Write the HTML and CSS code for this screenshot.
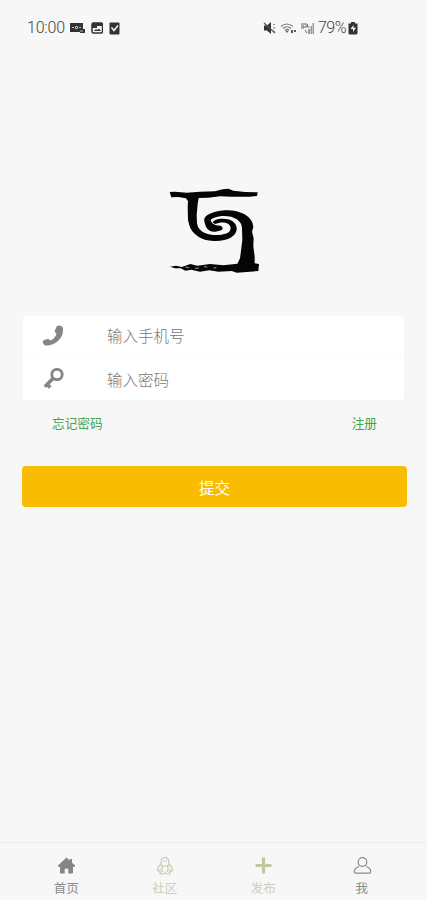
FILE: index.html
```html
<!DOCTYPE html>
<html lang="zh-CN">
<head>
<meta charset="utf-8">
<meta name="viewport" content="width=device-width, initial-scale=1">
<title>登录</title>
<link rel="stylesheet" href="styles.css">
</head>
<body>
<div class="screen">
  <header class="status">
    <div class="status-left">
      <span class="clock">10:00</span>
      <svg width="15" height="12" viewBox="0 0 15 12"><path fill="#333" d="M0 1h13v6h2v4H10v-1H0z"/><path fill="none" stroke="#bbb" d="M2 5.500h2M5.500 4.500h2v2h-2zM9 5.500h2M10 9h3"/></svg>
      <svg width="12" height="12" viewBox="0 0 12 12"><rect x="1" y="1" width="10.500" height="10" rx="1.500" fill="none" stroke="#333" stroke-width="1.500"/><path fill="#333" d="M1 1h10v3H6v2H1zM3 9l2-2 1.500 1L8 6.500l2 2.500z"/></svg>
      <svg width="11" height="13" viewBox="0 0 11 13"><rect x=".5" y=".5" width="10" height="12" rx="1" fill="#333"/><path d="M2.500 5.500l2.500 3 4-5" fill="none" stroke="#f5f5f5" stroke-width="1.500"/></svg>
    </div>
    <div class="status-right">
      <svg width="14" height="12" viewBox="0 0 14 12"><path fill="#333" d="M1 3.500h3L8 0v12L4 8.500H1z"/><path d="M1 1l11 10" stroke="#555" stroke-width="1.300"/><path d="M10 3l2-1M10 6h2.500M10.500 9l1.500 1" stroke="#777"/></svg>
      <svg width="17" height="13" viewBox="0 0 17 13"><path fill="none" stroke="#777" stroke-width="1.200" d="M1 4.500q6-5 12 0M3 6.500q4-3.500 8 0M5 8.500q2-2 4 0"/><path fill="#555" d="M5.500 9h3L7 11zM11 8h2v3h-2zM14 8h2v2h-2z"/></svg>
      <svg width="15" height="13" viewBox="0 0 15 13"><path fill="none" stroke="#666" d="M1 2h4M1 4h3v2H1M6 1v5M7.500 2v3h2M5 8l2 3"/><path fill="#999" d="M8 7h2v5H8zM10.500 4h1.500v8h-1.500zM12.500 1H14v11h-1.500z"/></svg>
      <span class="battery">79%</span>
      <svg width="10" height="13" viewBox="0 0 10 13"><path fill="#333" d="M3 0h4v1.500h2.500v10L8.500 12.500h-7L.5 11.500v-10H3z"/><path fill="#f5f5f5" d="M5.500 3L2.500 7H5v3l3-4.200H5.500z"/></svg>
    </div>
  </header>

  <main class="login">
    <svg class="logo" width="110" height="100" viewBox="0 0 330 300">
      <g fill="#050505">
        <path d="M29 36L45 35 80 38 120 35 165 34 188 28 205 26 220 32 255 36 293 37 291 48 270 50 215 50 180 49 145 53 116 54 113 72 110 105 111 130C114 151 132 163 160 165 191 166 212 160 212 144 210 124 180 125 166 132L158 128Q160 120 177 117C202 113 229 122 230 144 232 166 205 185 160 183 125 183 94 161 88 136L84 120 83 80 84 64 78 55 55 51 34 52Z"/>
        <path d="M280 142C279 108 240 90 194 91 155 94 129 108 133 123 136 143 146 157 166 155L184 151Q193 144 182 137L168 136Q154 131 152 120 157 112 185 108C222 106 248 122 246 148L247 180 243 212 240 235 232 251 190 256 150 252 112 257 91 252 65 261 48 257 30 260 45 265 62 265 76 272 94 269 120 275 148 271 175 275 215 273 230 278 270 275 295 273 297 252 284 250 284 230 280 198 281 175 276 155Z"/>
      </g>
      <path d="M76 261l12 2M105 265l12-1M132 259l10 3M160 264l9-1" stroke="#ddd" stroke-width="2"/>
    </svg>

    <form class="form">
      <div class="card">
        <label class="row">
          <svg class="row-icon" width="22" height="22" viewBox="0 0 22 22"><path fill="#858585" d="M14.700 1.200Q17 -.2 19 .8L20.800 2.500Q21.900 10 16.500 15.500 10.500 21 3 20.500L1 18.300Q.2 16.500 1.700 15.200L6.200 13.800 8.300 15.500Q12.800 13.800 14.500 9L12.800 6.800Q12.500 5.500 13.500 4.300Z"/></svg>
          <input class="field" type="tel" placeholder="输入手机号">
        </label>
        <label class="row">
          <svg class="row-icon" width="22" height="22" viewBox="0 0 22 22"><g fill="none" stroke="#858585"><circle cx="15" cy="6.500" r="5.200" stroke-width="2.800"/><path d="M11.200 10.300L2.800 18.700M4.300 15.500l4 4" stroke-width="3.600"/></g></svg>
          <input class="field" type="password" placeholder="输入密码">
        </label>
      </div>
      <div class="links"><a>忘记密码</a><a>注册</a></div>
      <button class="submit" type="button">提交</button>
    </form>
  </main>

  <nav class="tabs">
    <a class="tab">
      <svg width="20" height="20" viewBox="0 0 20 20"><path fill="#858585" d="M10.500 1.500L13.700 4.500V3h2.300V6.700L19 9.600v1.200h-2V16.500q0 1-1 1h-3.700v-4.700H8.700v4.700H5q-1 0-1-1V10.800H2V9.600z"/></svg>
      <span>首页</span>
    </a>
    <a class="tab muted">
      <svg width="20" height="20" viewBox="0 0 20 20"><g fill="none" stroke="#c8cbb0" stroke-width="1.200"><path d="M6 8V6Q6.500 1.500 10 1.500T14 6V8q3.800 3.500 3.500 6.500-.6 1.300-2.200-.3Q15.500 15 14.200 16q1.500.8.6 1.800-3 .7-4.800-.8Q8.200 18.500 5.200 17.800q-.9-1 .6-1.800Q4.500 15 4.700 14.200q-1.600 1.600-2.200.3Q2.200 11.500 6 8z"/><path d="M6 9q4 2.500 8 0M7.300 10q-1.300 3 .7 6M12.700 10q1.300 3-.7 6M8.700 4.500V6M11.300 4.500V6"/></g></svg>
      <span>社区</span>
    </a>
    <a class="tab muted">
      <svg width="20" height="20" viewBox="0 0 20 20"><path d="M10.500 1.500v16M2.500 9.500h16" stroke="#c3c79d" stroke-width="3.200"/></svg>
      <span>发布</span>
    </a>
    <a class="tab">
      <svg width="20" height="20" viewBox="0 0 20 20"><g fill="none" stroke="#8a8a8a" stroke-width="1.200" stroke-linejoin="round"><circle cx="10.500" cy="6" r="4.300"/><path d="M7 10.500Q2.200 12 2.200 16q0 1.200 1.200 1.200h14.200q1.200 0 1.200-1.200Q18.800 12 14 10.500"/></g></svg>
      <span>我</span>
    </a>
  </nav>
</div>
</body>
</html>
```
FILE: styles.css
```css
* { box-sizing: border-box; }

body {
  margin: 0;
  background: #f7f7f7;
  font-family: "Noto Sans CJK SC", sans-serif;
  font-weight: 300;
}

svg { display: block; flex: none; }

.screen {
  display: flex;
  flex-direction: column;
  height: 900px;
}

.status {
  display: flex;
  justify-content: space-between;
  height: 56px;
  padding: 0 69px 0 27px;
  color: #444;
  font: 16px/20px Roboto, sans-serif;
  font-weight: 300;
}

.status-left,
.status-right { display: flex; align-items: center; }

.status-left { gap: 6px; }
.status-right { gap: 3px; }
.clock { width: 37px; white-space: nowrap; letter-spacing: -0.2px; }
.battery { margin-right: -1px; letter-spacing: -0.5px; }

.login {
  flex: 1;
  padding: 124px 20px 0 22px;
}

.logo { margin-left: 138px; }

.form { margin-top: 36px; }

.card {
  width: 381px;
  margin-left: 1px;
  border-radius: 3px;
  background: #fff;
}

.row {
  display: flex;
  align-items: center;
  height: 42px;
  padding-left: 19px;
}

.row-icon { margin-top: -3px; }

.row + .row { border-top: 1px solid #fafafa; }

.row + .row .row-icon { margin-top: -1px; }

.field {
  flex: 1;
  height: 40px;
  margin-left: 43px;
  padding: 0 0 4px;
  border: 0;
  outline: 0;
  background: transparent;
  font: inherit;
  font-size: 15.5px;
}

.row + .row .field { padding-bottom: 2px; }

.field::placeholder { color: #777; opacity: 1; }

.links {
  display: flex;
  justify-content: space-between;
  height: 66px;
  padding: 13px 30px 0;
  color: #45a34d;
  font-size: 12.7px;
  font-weight: 400;
  line-height: 20px;
}

.submit {
  display: block;
  width: 385px;
  height: 41px;
  padding: 0;
  border: 0;
  border-radius: 4px;
  background: #f8bd02;
  color: #fff;
  font: inherit;
  font-size: 15.5px;
  font-weight: 400;
}

.tabs {
  display: flex;
  height: 58px;
  padding: 13px 16px 0 17px;
  border-top: 1px solid #ebebeb;
}

.tab {
  display: flex;
  flex: 1;
  flex-direction: column;
  align-items: center;
  gap: 4px;
  color: #8a8a8a;
  font-size: 12.5px;
  font-weight: 400;
  line-height: 16px;
}

.tab.muted { color: #cccebd; }
```
